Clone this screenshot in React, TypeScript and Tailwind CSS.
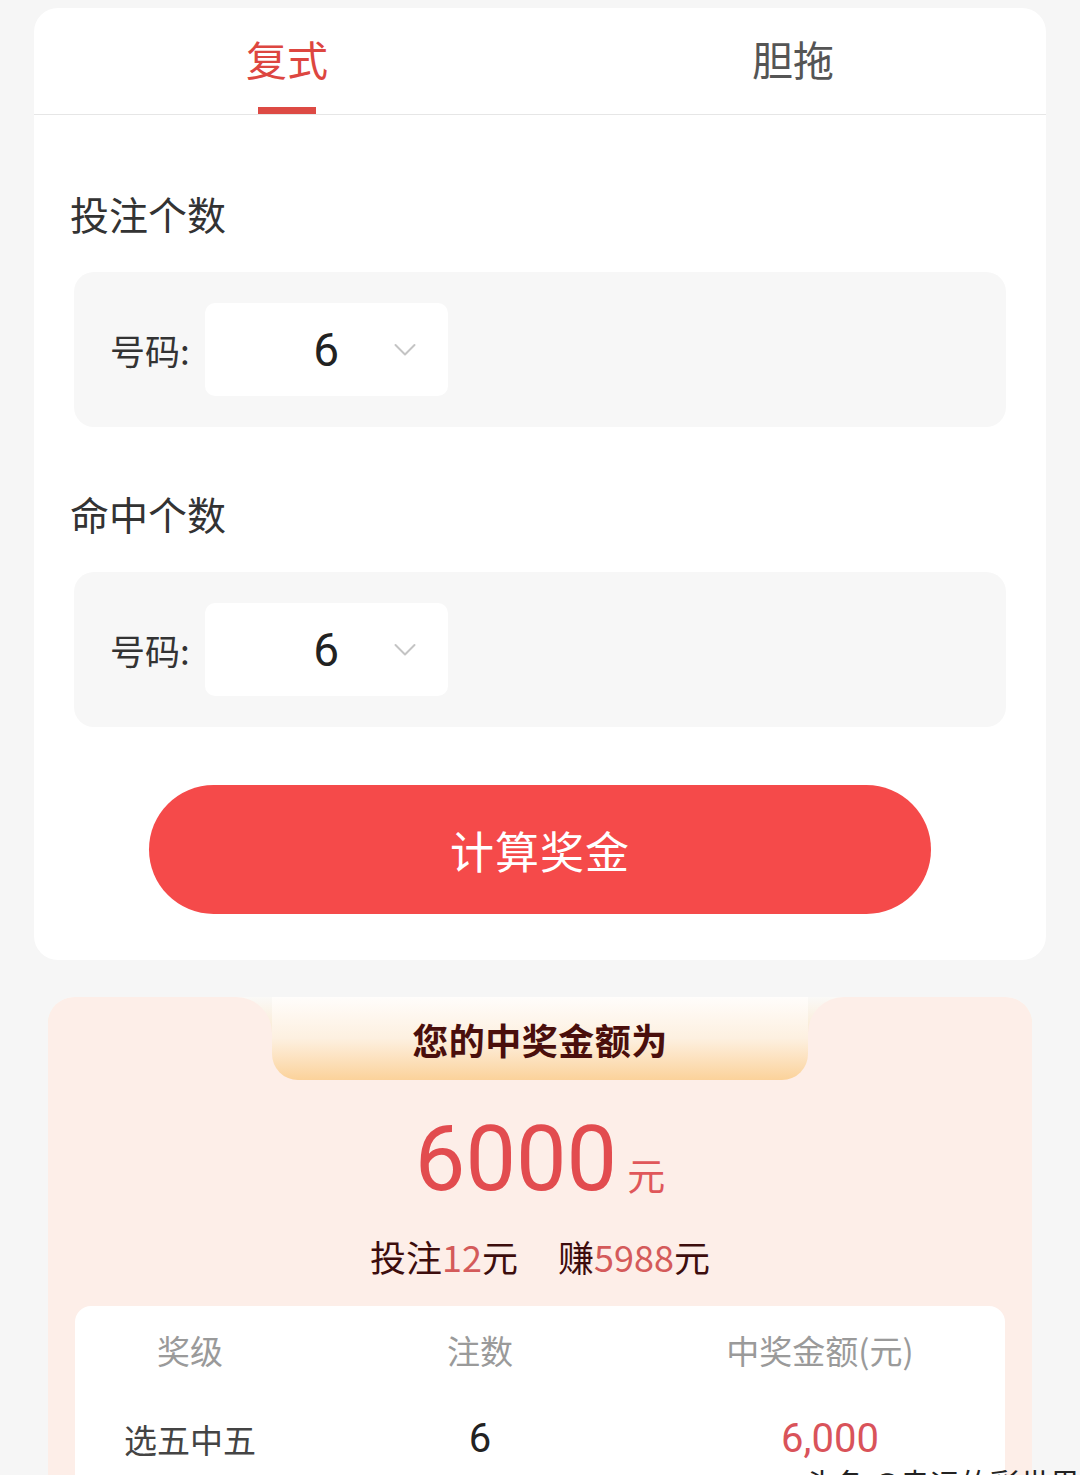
import { useState } from "react";

const cjk = "font-['Noto_Sans_CJK_SC',sans-serif]";

function Chevron() {
    return (
        <svg
            width="22"
            height="13"
            viewBox="0 0 22 13"
            fill="none"
            className="absolute right-[32px] top-1/2 -translate-y-1/2"
        >
            <path
                d="M1.5 1.5 L11 11 L20.5 1.5"
                stroke="#c4c4c4"
                strokeWidth="2"
                strokeLinecap="round"
                strokeLinejoin="round"
            />
        </svg>
    );
}

function NumberPicker({ value }: { value: number }) {
    return (
        <div className="mx-[4px] h-[155px] rounded-[20px] bg-[#f7f7f7] pl-[36px] flex items-center">
            <span className="text-[35px] text-[#333] leading-none">号码:</span>
            <div className="relative ml-[15px] w-[243px] h-[93px] rounded-[10px] bg-white flex items-center justify-center">
                <span className="font-['Roboto',sans-serif] text-[46px] text-[#222] leading-none">
                    {value}
                </span>
                <Chevron />
            </div>
        </div>
    );
}

function App() {
    const [tab, setTab] = useState("fushi");

    const tabs = [
        { id: "fushi", label: "复式" },
        { id: "dantuo", label: "胆拖" },
    ];

    return (
        <div className={`${cjk} relative min-h-[1600px] bg-[#f6f6f6] pt-[8px] px-[34px] pb-10`}>
            {/* calculator card */}
            <div className="rounded-[24px] bg-white">
                <div className="flex border-b border-[#e6e6e6]">
                    {tabs.map((t) => (
                        <button
                            key={t.id}
                            onClick={() => setTab(t.id)}
                            className="flex-1 flex flex-col items-center pt-[26px]"
                        >
                            <span
                                className={`text-[41px] leading-[48px] ${tab === t.id ? "text-[#dd4640]" : "text-[#555]"}`}
                            >
                                {t.label}
                            </span>
                            <span
                                className={`mt-[25px] h-[7px] w-[58px] ${tab === t.id ? "bg-[#dd4a44]" : "bg-transparent"}`}
                            />
                        </button>
                    ))}
                </div>

                <div className="px-[36px] pt-[74px] pb-[46px]">
                    <h2 className="text-[39px] leading-[48px] text-[#333]">投注个数</h2>
                    <div className="mt-[35px]">
                        <NumberPicker value={6} />
                    </div>

                    <h2 className="mt-[62px] text-[39px] leading-[48px] text-[#333]">命中个数</h2>
                    <div className="mt-[35px]">
                        <NumberPicker value={6} />
                    </div>

                    <div className="mt-[58px] flex justify-center">
                        <button className="w-[782px] h-[129px] rounded-full bg-[#f54a4a] text-white text-[44px] tracking-[1px]">
                            计算奖金
                        </button>
                    </div>
                </div>
            </div>

            {/* result card */}
            <div className="mt-[37px] mx-[14px] rounded-[26px] overflow-hidden">
                <div className="flex h-[83px] bg-gradient-to-b from-[#faf9f7] to-[#fbd6a0]">
                    <div className="flex-1 bg-[#fdeee8] rounded-tl-[26px] rounded-tr-[36px]" />
                    <div className="w-[536px] bg-[#fdeee8]">
                        <div className="h-full rounded-b-[26px] bg-gradient-to-b from-[#fffdfb] via-[#fdf0e0] to-[#fbd29a] flex items-center justify-center">
                            <span className="text-[36px] font-bold text-[#4a0f0c] tracking-[0.5px]">
                                您的中奖金额为
                            </span>
                        </div>
                    </div>
                    <div className="flex-1 bg-[#fdeee8] rounded-tr-[26px] rounded-tl-[36px]" />
                </div>

                <div className="bg-[#fdeee8] px-[27px] pb-[60px]">
                    <div className="pt-[30px] flex items-baseline justify-center">
                        <span className="font-['Roboto',sans-serif] text-[90px] leading-[100px] text-[#e24c4f]">
                            6000
                        </span>
                        <span className="ml-[10px] text-[38px] text-[#e0575a]">元</span>
                    </div>

                    <div className="mt-[22px] flex justify-center text-[36px] leading-[48px] text-[#3d0d0d]">
                        <span>
                            投注<span className="text-[#d45a5a]">12</span>元
                        </span>
                        <span className="ml-[40px]">
                            赚<span className="text-[#d45a5a]">5988</span>元
                        </span>
                    </div>

                    <div className="mt-[26px] rounded-[16px] bg-white pt-[20px] pb-[40px]">
                        <div className="grid grid-cols-[230px_350px_330px] text-[33px] leading-[48px] text-[#9a9a9a] text-center">
                            <span>奖级</span>
                            <span>注数</span>
                            <span>中奖金额(元)</span>
                        </div>
                        <div className="mt-[41px] grid grid-cols-[230px_350px_350px] items-center text-[33px] leading-[48px] text-center">
                            <span className="text-[#444]">选五中五</span>
                            <span className="font-['Roboto',sans-serif] text-[40px] text-[#222]">6</span>
                            <span className="font-['Roboto',sans-serif] text-[40px] text-[#d9535a]">6,000</span>
                        </div>
                    </div>
                </div>
            </div>

            {/* watermark */}
            <span className="absolute left-[805px] top-[1462px] text-[30px] leading-[40px] text-[#222] whitespace-nowrap">
                头条 @幸运的彩世界
            </span>
        </div>
    );
}

export default App;
